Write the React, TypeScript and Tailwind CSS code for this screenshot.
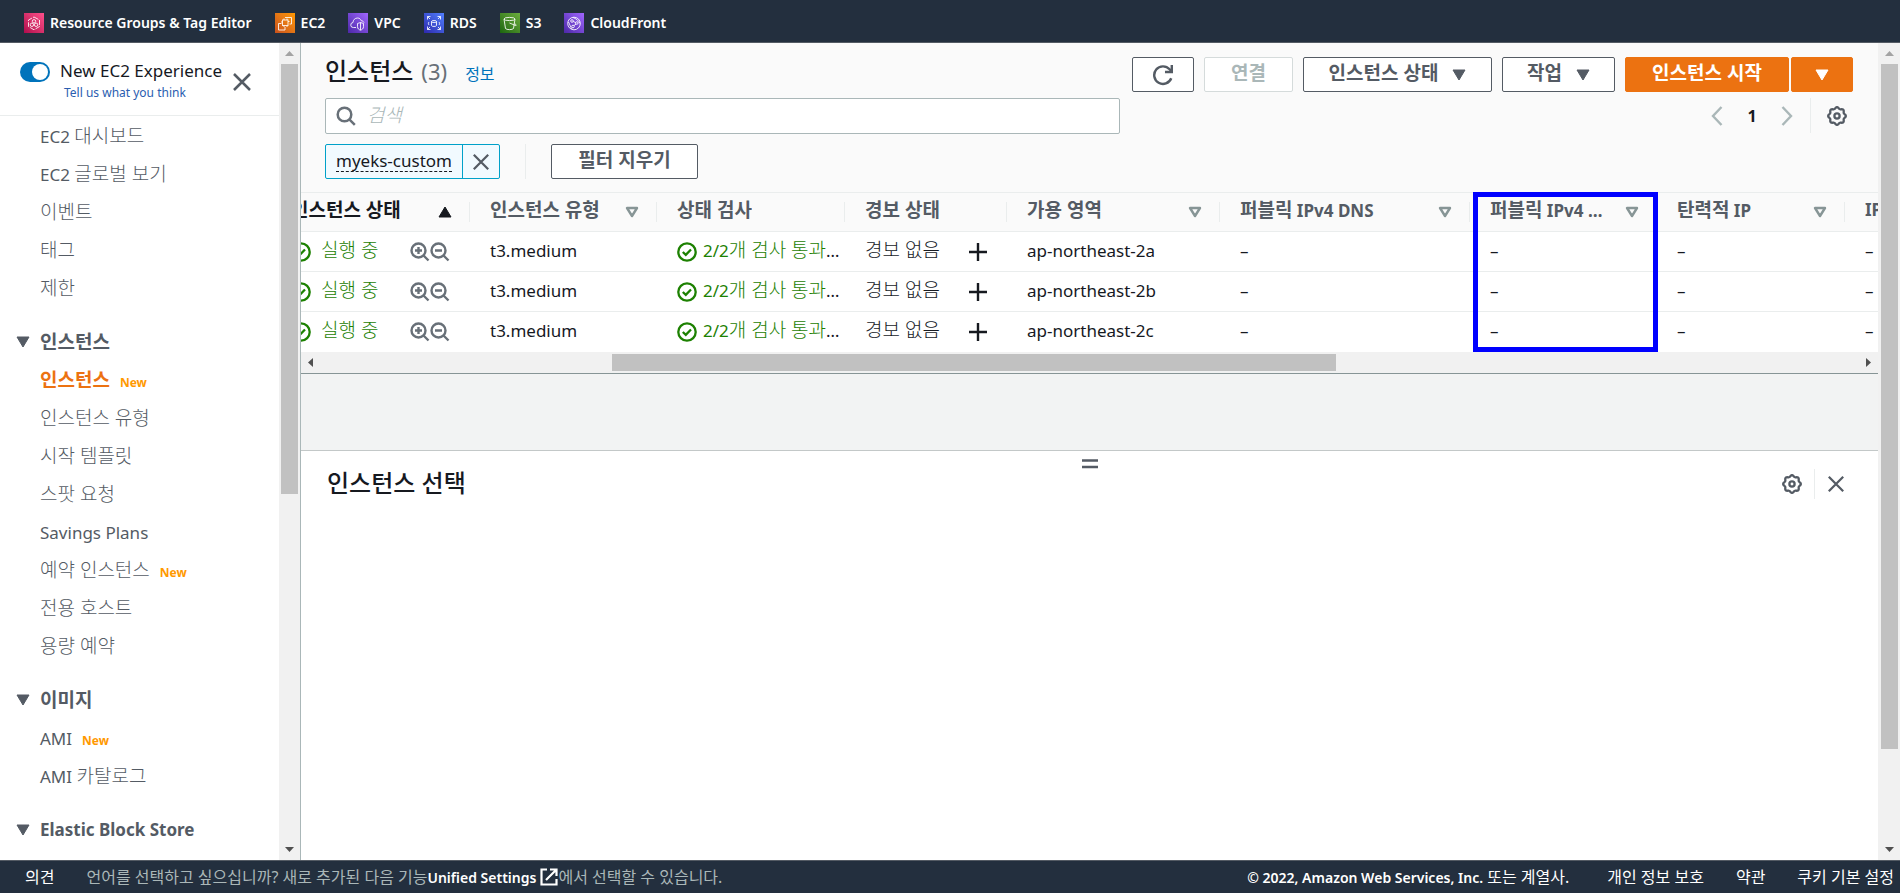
import React from "react";

const fontStack = "font-['Noto_Sans','Noto_Sans_CJK_KR',sans-serif]";

/* Sets Hangul runs a little larger, and optionally lighter, than the Latin text beside them. */
const Mixed = ({ children, light = false }: { children: string; light?: boolean }) => (
  <>
    {children.split(/([\uac00-\ud7a3]+(?:\s+[\uac00-\ud7a3]+)*)/).map((part, i) =>
      i % 2 ? <span key={i} className={`text-[19px] leading-6 ${light ? "font-light" : ""}`}>{part}</span> : part
    )}
  </>
);

const Triangle = ({ className = "" }: { className?: string }) => (
  <svg viewBox="0 0 14 12" className={`h-3 w-3.5 shrink-0 ${className}`} aria-hidden="true">
    <path d="M1 1h12L7 11z" fill="currentColor" stroke="currentColor" strokeLinejoin="round" />
  </svg>
);

const SortIcon = () => (
  <svg viewBox="0 0 14 12" className="h-3 w-3.5 shrink-0 text-[#879596]" aria-hidden="true">
    <path d="M2 2h10L7 10z" fill="none" stroke="currentColor" strokeWidth="2.4" strokeLinejoin="round" />
  </svg>
);

const Close = ({ className = "size-5" }: { className?: string }) => (
  <svg viewBox="0 0 20 20" className={className} fill="none" stroke="currentColor" strokeWidth="2.5" aria-hidden="true">
    <path d="M2 2l16 16M18 2L2 18" />
  </svg>
);

const gearOutline =
  Array.from({ length: 72 }, (_, i) => {
    const a = (i * Math.PI) / 36;
    const r = 8.1 + 0.75 * Math.cos(8 * a);
    return `${i ? "L" : "M"}${(10 + r * Math.cos(a)).toFixed(2)} ${(10 + r * Math.sin(a)).toFixed(2)}`;
  }).join("") + "z";

const Gear = () => (
  <svg viewBox="0 0 20 20" className="size-5" fill="none" stroke="currentColor" strokeWidth="2.3" strokeLinejoin="round" aria-hidden="true">
    <path d={gearOutline} />
    <circle cx="10" cy="10" r="2.6" />
  </svg>
);

const Check = () => (
  <svg viewBox="0 0 20 20" className="size-5 shrink-0 text-[#1d8102]" fill="none" stroke="currentColor" strokeWidth="2.3" aria-hidden="true">
    <circle cx="10" cy="10" r="8.7" />
    <path d="M5.8 10l3 2.9 5.2-5.4" />
  </svg>
);

const Zoom = ({ plus = false }: { plus?: boolean }) => (
  <svg viewBox="0 0 20 20" className="size-5 shrink-0" fill="none" stroke="currentColor" strokeWidth="2.4" aria-hidden="true">
    <circle cx="8.5" cy="8.5" r="7" />
    <path d="M13.5 13.5l5 5M5 8.5h7" />
    {plus && <path d="M8.5 5v7" />}
  </svg>
);

const services = [
  {
    name: "Resource Groups & Tag Editor",
    color: "bg-linear-to-tr from-[#b0084d] to-[#ff4f8b]",
    art: <><path d="M10 4l5.500 3v6.500L10 16.800l-5.500-3.300V7z" strokeDasharray="5 1.200" /><circle cx="10" cy="8.300" r="1.700" /><circle cx="7.900" cy="11.800" r="1.700" /><circle cx="12.100" cy="11.800" r="1.700" /></>,
  },
  {
    name: "EC2",
    color: "bg-linear-to-tr from-[#c8511b] to-[#ff9900]",
    art: <><rect x="7.500" y="7" width="5.500" height="5.500" /><path d="M10 4.500h6.500V11h-2M6.500 10.500H3.500v6.500H10v-3M9 5.500V7M12 5.500V7M14.500 8.500H13M7.500 9H6M9 12.500V14M12 12.500V14" /></>,
  },
  {
    name: "VPC",
    color: "bg-linear-to-tr from-[#4d27a8] to-[#a166ff]",
    art: <><path d="M8 14.500H5.500a2.500 2.500 0 01-.5-5C5 7 7 5 9.500 5c2 0 3.200 1.200 3.700 2.700 1.500 0 2.400.8 2.800 2" /><path d="M12.500 9.500l3 1v3.200c0 2-1.500 3-3 3.500-1.500-.5-3-1.500-3-3.500v-3.200zM12.500 9.500v7.500" /></>,
  },
  {
    name: "RDS",
    color: "bg-linear-to-tr from-[#2e27ad] to-[#527fff]",
    art: <><path d="M3.500 6.500v-3h3M3.500 3.500L6 6M16.500 6.500v-3h-3M16.500 3.500L14 6M3.500 13.500v3h3M3.500 16.500L6 14M16.500 13.500v3h-3M16.500 16.500L14 14" /><ellipse cx="10" cy="8.500" rx="2.500" ry="1" /><path d="M7.500 8.500v4c0 1.300 5 1.300 5 0v-4M5 9c-.8 1-.8 2 0 3M15 9c.8 1 .8 2 0 3" /></>,
  },
  {
    name: "S3",
    color: "bg-linear-to-tr from-[#1b660f] to-[#6cae3e]",
    art: <><ellipse cx="9.500" cy="6" rx="5.500" ry="1.600" /><path d="M4 6l1.500 9.500c1 1.500 7 1.500 8 0L15 6M9.500 10l6 2.500c1.200.3 1-.8-.8-1.800" /></>,
  },
  {
    name: "CloudFront",
    color: "bg-linear-to-tr from-[#4d27a8] to-[#a166ff]",
    art: <><circle cx="10" cy="10.500" r="6.300" /><circle cx="8" cy="8" r="1.300" /><circle cx="12.800" cy="10" r="1.300" /><circle cx="9" cy="13.500" r="1.300" /><path d="M9.200 8.500l2.400 1M12 11.200L10 12.500M4.500 9c1.500 3 2 5 3.500 7M9 4.500c3 1 5.500 3 7 6" /></>,
  },
];

const sections: { title?: string; items: { label: string; isNew?: boolean; active?: boolean }[] }[] = [
  {
    items: [{ label: "EC2 대시보드" }, { label: "EC2 글로벌 보기" }, { label: "이벤트" }, { label: "태그" }, { label: "제한" }],
  },
  {
    title: "인스턴스",
    items: [
      { label: "인스턴스", isNew: true, active: true },
      { label: "인스턴스 유형" },
      { label: "시작 템플릿" },
      { label: "스팟 요청" },
      { label: "Savings Plans" },
      { label: "예약 인스턴스", isNew: true },
      { label: "전용 호스트" },
      { label: "용량 예약" },
    ],
  },
  { title: "이미지", items: [{ label: "AMI", isNew: true }, { label: "AMI 카탈로그" }] },
  { title: "Elastic Block Store", items: [] },
];

function VerticalScrollbar({ width, thumb }: { width: string; thumb: string }) {
  return (
    <div className={`flex shrink-0 flex-col items-center bg-[#f1f1f1] ${width}`} aria-hidden="true">
      <div className="flex h-[21px] items-center">
        <svg viewBox="0 0 9 5" className="h-[5px] w-[9px]"><path d="M0 5L4.500 0 9 5z" fill="#a3a3a3" /></svg>
      </div>
      <div className="flex-1">
        <div className={`w-[17px] bg-[#c1c1c1] ${thumb}`} />
      </div>
      <div className="flex h-[21px] items-center">
        <svg viewBox="0 0 9 5" className="h-[5px] w-[9px]"><path d="M0 0l4.500 5L9 0z" fill="#505050" /></svg>
      </div>
    </div>
  );
}

function Sidebar() {
  return (
    <aside className="flex w-[301px] shrink-0 border-r border-[#aab7b8] bg-white">
      <div className="min-w-0 flex-1 overflow-hidden">
        <div className="flex h-[73px] items-start border-b border-[#eaeded] pl-5">
          <button role="switch" aria-checked="true" aria-label="New EC2 Experience" className="mt-[19px] flex h-5 w-[30px] justify-end rounded-full bg-[#0073bb] p-0.5">
            <span className="size-4 rounded-full bg-white" />
          </button>
          <div className="ml-2.5 mt-4 whitespace-nowrap">
            <p className="text-[17px] leading-6 text-[#16191f]">New EC2 Experience</p>
            <a href="#feedback" className="ml-1 block text-[12px] leading-5 text-[#2a5db0]">Tell us what you think</a>
          </div>
          <button aria-label="닫기" className="ml-2.5 mt-[29px] text-[#545b64]"><Close /></button>
        </div>
        <nav className="pt-0.5 text-[17px] leading-6 text-[#545b64]">
          {sections.map((s, i) => (
            <div key={i}>
              {s.title && (
                <button className="mt-3.5 flex h-10 items-center gap-2.5 pl-4 font-bold">
                  <Triangle />
                  <span><Mixed>{s.title}</Mixed></span>
                </button>
              )}
              <ul>
                {s.items.map((it) => (
                  <li key={it.label} className="flex h-[38px] items-center pb-px pl-10">
                    <a href="#nav" className={it.active ? "font-bold text-[#ec7211]" : ""}><Mixed light={!it.active}>{it.label}</Mixed></a>
                    {it.isNew && <span className="ml-2.5 mt-1 text-[12px] font-bold text-[#ff9900]">New</span>}
                  </li>
                ))}
              </ul>
            </div>
          ))}
        </nav>
      </div>
      <VerticalScrollbar width="w-[21px]" thumb="h-[430px]" />
    </aside>
  );
}

const columns: { label: string; width: string; sort?: "active" | "none" }[] = [
  { label: "인스턴스 상태", width: "w-[199px]", sort: "active" },
  { label: "인스턴스 유형", width: "w-[187px]", sort: "none" },
  { label: "상태 검사", width: "w-[188px]" },
  { label: "경보 상태", width: "w-[162px]" },
  { label: "가용 영역", width: "w-[213px]", sort: "none" },
  { label: "퍼블릭 IPv4 DNS", width: "w-[250px]", sort: "none" },
  { label: "퍼블릭 IPv4 주소", width: "w-[187px]", sort: "none" },
  { label: "탄력적 IP", width: "w-[188px]", sort: "none" },
  { label: "IPv6 IP", width: "w-[188px]", sort: "none" },
];

const zones = ["ap-northeast-2a", "ap-northeast-2b", "ap-northeast-2c"];

const cell = "p-0 pb-0.5 pl-5";

function InstanceTable() {
  return (
    <div className="relative overflow-hidden">
      <table className="-ml-[30px] w-[1762px] table-fixed border-collapse text-[17px] leading-6 text-[#16191f]">
        <thead className="bg-[#fafafa] text-[#545b64]">
          <tr className="h-[39px] border-y border-[#eaeded]">
            {columns.map((c) => (
              <th key={c.label} scope="col" className={`${c.width} p-0 text-left font-bold ${c.sort === "active" ? "text-[#16191f]" : ""}`}>
                <div className="flex h-5 items-center justify-between gap-3 border-r border-[#eaeded] pl-5 pr-[17px]">
                  <span className="truncate pb-1"><Mixed>{c.label}</Mixed></span>
                  {c.sort === "none" && <SortIcon />}
                  {c.sort === "active" && <Triangle className="rotate-180" />}
                </div>
              </th>
            ))}
          </tr>
        </thead>
        <tbody className="bg-white">
          {zones.map((z) => (
            <tr key={z} className="h-10 border-b border-[#eaeded] last:border-0">
              <td className="p-0 pl-5">
                <div className="flex items-center">
                  <Check />
                  <span className="ml-2.5 pb-0.5 text-[#1d8102]"><Mixed light>실행 중</Mixed></span>
                  <span className="ml-auto mr-5 flex text-[#687078]">
                    <button aria-label="필터 포함"><Zoom plus /></button>
                    <button aria-label="필터 제외"><Zoom /></button>
                  </span>
                </div>
              </td>
              <td className={cell}>t3.medium</td>
              <td className="p-0 pl-5">
                <div className="flex items-center gap-1.5">
                  <Check />
                  <span className="truncate pb-0.5"><span className="text-[#1d8102]"><Mixed light>2/2개 검사 통과했음</Mixed></span></span>
                </div>
              </td>
              <td className="p-0 pl-5">
                <div className="flex items-center justify-between pr-5">
                  <span className="pb-0.5"><Mixed light>경보 없음</Mixed></span>
                  <button aria-label="경보 추가">
                    <svg viewBox="0 0 18 18" className="size-[18px]" stroke="currentColor" strokeWidth="2.4" aria-hidden="true"><path d="M9 0v18M0 9h18" /></svg>
                  </button>
                </div>
              </td>
              <td className={cell}>{z}</td>
              <td className={cell}>–</td>
              <td className={cell}>–</td>
              <td className={cell}>–</td>
              <td className={cell}>–</td>
            </tr>
          ))}
        </tbody>
      </table>
      <div className="pointer-events-none absolute bottom-0 left-[1172px] top-0 w-[185px] border-[5px] border-[#0000ff]" />
    </div>
  );
}

const btn = "flex h-[35px] items-center justify-center rounded-[2px] border text-[19px] leading-6 font-bold";

function Toolbar() {
  return (
    <header className="bg-[#fafafa] pl-6 pr-[25px]">
      <div className="flex h-[54px] items-start justify-between">
        <div className="flex items-baseline pt-3 leading-8">
          <h1 className="text-[24px] font-medium text-[#16191f]">인스턴스</h1>
          <span className="ml-2 text-[22px] text-[#687078]">(3)</span>
          <a href="#info" className="ml-[18px] text-[16px] text-[#0073bb]">정보</a>
        </div>
        <div className="flex gap-2.5 pt-3.5 text-[#545b64]">
          <button aria-label="새로 고침" className={`${btn} w-[62px] border-[#545b64] bg-white`}>
            <svg viewBox="0 0 20 20" className="size-[22px]" fill="none" stroke="currentColor" strokeWidth="2.2" aria-hidden="true">
              <path d="M17.500 13A8 8 0 1 1 16 4.800L18 7" /><path d="M18 1v6.200h-6.200" />
            </svg>
          </button>
          <button disabled className={`${btn} w-[89px] border-[#d5dbdb] bg-white text-[#aab7b8]`}><span className="pb-1">연결</span></button>
          <button className={`${btn} w-[189px] gap-3.5 border-[#545b64] bg-white`}><span className="pb-1">인스턴스 상태</span><Triangle /></button>
          <button className={`${btn} w-[113px] gap-3.5 border-[#545b64] bg-white`}><span className="pb-1">작업</span><Triangle /></button>
          <div className="flex gap-0.5 text-white">
            <button className={`${btn} w-[164px] border-[#ec7211] bg-[#ec7211]`}><span className="pb-1">인스턴스 시작</span></button>
            <button aria-label="시작 옵션" className={`${btn} w-[62px] border-[#ec7211] bg-[#ec7211]`}><Triangle /></button>
          </div>
        </div>
      </div>
      <div className="flex items-center justify-between">
        <label className="mt-px flex h-9 w-[795px] items-center rounded-[2px] border border-[#aab7b8] bg-white pl-2.5 text-[#687078]">
          <svg viewBox="0 0 20 20" className="size-5" fill="none" stroke="currentColor" strokeWidth="2.500" aria-hidden="true">
            <circle cx="8.500" cy="8.500" r="6.800" /><path d="M13.300 13.300l5.500 5.500" />
          </svg>
          <input type="text" aria-label="검색" placeholder="검색" className="ml-[11px] flex-1 bg-transparent pb-0.5 text-[19px] font-light outline-none placeholder:italic placeholder:text-[#aab7b8]" />
        </label>
        <div className="flex items-center">
          <button aria-label="이전 페이지" className="text-[#aab7b8]">
            <svg viewBox="0 0 12 20" className="h-5 w-3" fill="none" stroke="currentColor" strokeWidth="2.400"><path d="M10.500 1L2 10l8.500 9" /></svg>
          </button>
          <span className="w-[58px] text-center text-[16px] font-bold text-[#16191f]">1</span>
          <button aria-label="다음 페이지" className="text-[#aab7b8]">
            <svg viewBox="0 0 12 20" className="h-5 w-3" fill="none" stroke="currentColor" strokeWidth="2.400"><path d="M1.500 1L10 10l-8.500 9" /></svg>
          </button>
          <div className="ml-[17px] h-[35px] w-px bg-[#eaeded]" />
          <button aria-label="기본 설정" className="ml-4 mr-1.5 text-[#545b64]"><Gear /></button>
        </div>
      </div>
      <div className="flex items-center pb-[13px] pt-2.5">
        <div className="flex h-[35px] items-center rounded-[2px] border border-[#00a1c9] bg-[#f1faff]">
          <button className="mx-2.5 border-b border-dashed border-[#16191f] text-[17px] leading-5 text-[#16191f]">myeks-custom</button>
          <button aria-label="필터 제거" className="flex h-full w-[37px] items-center justify-center border-l border-[#00a1c9] text-[#545b64]">
            <Close className="size-[18px]" />
          </button>
        </div>
        <div className="ml-[25px] h-[35px] w-px bg-[#eaeded]" />
        <button className={`${btn} ml-[25px] w-[147px] border-[#545b64] bg-white text-[#545b64]`}><span className="pb-1">필터 지우기</span></button>
      </div>
    </header>
  );
}

export default function App() {
  return (
    <div className={`flex h-screen flex-col overflow-hidden ${fontStack}`}>
      <nav className="flex h-[43px] shrink-0 items-center gap-[23px] border-b border-[#545b64] bg-[#232f3e] pb-px pl-6 pt-1 text-[14px] font-semibold text-white">
        {services.map((s) => (
          <a key={s.name} href="#service" className="flex items-center gap-1.5 whitespace-nowrap">
            <span className={`size-5 ${s.color}`}>
              <svg viewBox="0 0 20 20" className="size-5" fill="none" stroke="#fff" strokeOpacity="0.85" aria-hidden="true">{s.art}</svg>
            </span>
            {s.name}
          </a>
        ))}
      </nav>
      <div className="flex min-h-0 flex-1">
        <Sidebar />
        <main className="flex min-w-0 flex-1 flex-col bg-white">
          <Toolbar />
          <InstanceTable />
          <div className="flex h-[21px] shrink-0 items-center bg-[#f1f1f1] px-[7px]" aria-hidden="true">
            <svg viewBox="0 0 5 9" className="h-[9px] w-[5px]"><path d="M5 0L0 4.500 5 9z" fill="#505050" /></svg>
            <div className="mx-1.5 h-[17px] flex-1">
              <div className="ml-[19%] h-full w-[47%] bg-[#c1c1c1]" />
            </div>
            <svg viewBox="0 0 5 9" className="h-[9px] w-[5px]"><path d="M0 0l5 4.500L0 9z" fill="#505050" /></svg>
          </div>
          <div className="h-[77px] shrink-0 border-t border-[#879596] bg-[#f2f3f3]" />
          <section className="flex-1 border-t border-[#c3c8c8] bg-white">
            <div className="flex justify-center pt-2">
              <svg viewBox="0 0 16 10" className="h-2.5 w-4" stroke="#545b64" strokeWidth="2.600" aria-hidden="true"><path d="M0 1.500h16M0 8h16" /></svg>
            </div>
            <div className="flex items-center justify-between pl-[26px] pr-[33px]">
              <h2 className="pb-1 text-[24px] font-medium leading-7 text-[#16191f]">인스턴스 선택</h2>
              <div className="flex items-center pb-px text-[#545b64]">
                <button aria-label="패널 설정"><Gear /></button>
                <div className="ml-3 h-[30px] w-px bg-[#eaeded]" />
                <button aria-label="패널 닫기" className="ml-3"><Close className="size-[18px]" /></button>
              </div>
            </div>
          </section>
        </main>
        <VerticalScrollbar width="w-[22px]" thumb="h-[685px]" />
      </div>
      <footer className="flex h-[33px] shrink-0 items-center justify-between whitespace-nowrap border-t border-[#545b64] bg-[#232f3e] pl-[25px] pr-1.5 text-[16px] text-white">
        <div className="flex items-center">
          <button>의견</button>
          <span className="ml-8 text-[#aab7b8]">언어를 선택하고 싶으십니까? 새로 추가된 다음 기능</span>
          <a href="#settings" className="flex items-center gap-1 text-[14px] font-semibold">
            Unified Settings
            <svg viewBox="0 0 18 18" className="size-[18px]" fill="none" stroke="currentColor" strokeWidth="2.200" aria-hidden="true"><path d="M7 1.500H1.500v15h15V11M10 1.500h6.500V8M16.500 1.500L6 12" /></svg>
          </a>
          <span className="text-[#aab7b8]">에서 선택할 수 있습니다.</span>
        </div>
        <div className="flex items-center gap-8">
          <span><span className="text-[14px] font-semibold">© 2022, Amazon Web Services, Inc.</span> 또는 계열사.</span>
          <a href="#privacy" className="ml-1.5">개인 정보 보호</a>
          <a href="#terms">약관</a>
          <button>쿠키 기본 설정</button>
        </div>
      </footer>
    </div>
  );
}
